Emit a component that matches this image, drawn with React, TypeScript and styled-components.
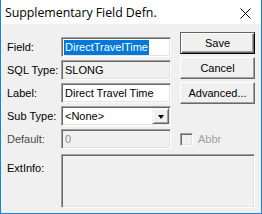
import React from 'react';
import styled, { createGlobalStyle } from 'styled-components';

const GlobalStyle = createGlobalStyle`
  html, body {
    margin: 0;
    padding: 0;
    background: #ffffff;
  }
  * {
    box-sizing: border-box;
  }
`;

const Window = styled.div`
  width: 262px;
  height: 214px;
  display: flex;
  flex-direction: column;
  border: 1px solid #1883d7;
  border-top: none;
  background: #f0f0f0;
  font-family: 'Liberation Sans', Arial, sans-serif;
  font-size: 11px;
  color: #000;
`;

const TitleBar = styled.div`
  height: 24px;
  display: flex;
  align-items: center;
  justify-content: space-between;
  padding: 0 10px 0 4px;
  background: #ffffff;
`;

const TitleText = styled.span`
  font-family: 'Open Sans', 'Noto Sans', sans-serif;
  font-size: 12.4px;
  letter-spacing: -0.05px;
  padding-top: 1px;
`;

const CloseIcon = styled.svg`
  width: 11px;
  height: 11px;
  margin-top: 2px;
`;

const Body = styled.div`
  flex: 1;
  display: flex;
  flex-direction: column;
  padding: 8px 6px 0 6px;
`;

const TopSection = styled.div`
  display: flex;
`;

const FormRows = styled.div`
  display: flex;
  flex-direction: column;
  gap: 3px;
  margin-top: 5px;
`;

const Row = styled.div<{ $mt?: number }>`
  display: flex;
  align-items: center;
  margin-top: ${(p) => p.$mt ?? 0}px;
`;

const TopRow = styled(Row)`
  align-items: flex-start;
`;

const Label = styled.span<{ $disabled?: boolean; $pt?: number }>`
  width: 54px;
  flex-shrink: 0;
  white-space: nowrap;
  color: ${(p) => (p.$disabled ? '#4a4a4a' : '#000')};
  padding-top: ${(p) => p.$pt ?? 0}px;
`;

const Edit = styled.div<{ $bg?: string; $w?: number; $h?: number; $color?: string }>`
  width: ${(p) => p.$w ?? 110}px;
  height: ${(p) => p.$h ?? 20}px;
  display: flex;
  align-items: center;
  padding-left: 1px;
  background: ${(p) => p.$bg ?? '#ffffff'};
  color: ${(p) => p.$color ?? '#000'};
  border-top: 1px solid #a0a0a0;
  border-left: 1px solid #a0a0a0;
  border-right: 1px solid #ffffff;
  border-bottom: 1px solid #ffffff;
  box-shadow: inset 1px 1px #696969, inset -1px -1px #e3e3e3;
  white-space: nowrap;
  overflow: hidden;
`;

const EditText = styled.span`
  padding-left: 2px;
`;

const Selected = styled.span`
  background: #0078d7;
  color: #ffffff;
  padding: 1px 1px 1px 1px;
  line-height: 13px;
  margin-left: 1px;
`;

const ComboText = styled.span`
  flex: 1;
  padding-left: 2px;
`;

const DropButton = styled.div`
  width: 17px;
  height: 16px;
  margin-right: 1px;
  display: flex;
  align-items: center;
  justify-content: center;
  background: #f0f0f0;
  border-top: 1px solid #f0f0f0;
  border-left: 1px solid #f0f0f0;
  border-right: 1px solid #696969;
  border-bottom: 1px solid #696969;
  box-shadow: inset 1px 1px #ffffff, inset -1px -1px #a0a0a0;
`;

const Arrow = styled.div`
  width: 0;
  height: 0;
  border-left: 3.5px solid transparent;
  border-right: 3.5px solid transparent;
  border-top: 4px solid #000;
  margin-top: 1px;
`;

const ButtonColumn = styled.div`
  display: flex;
  flex-direction: column;
  gap: 3px;
  margin-left: 9px;
`;

const Button = styled.button<{ $default?: boolean }>`
  width: 75px;
  height: 22px;
  margin: 0;
  padding: 0;
  font-family: 'Liberation Sans', Arial, sans-serif;
  font-size: 11px;
  color: #000;
  background: #f0f0f0;
  border-top: 1px solid ${(p) => (p.$default ? '#646464' : '#ffffff')};
  border-left: 1px solid ${(p) => (p.$default ? '#646464' : '#ffffff')};
  border-right: 1px solid ${(p) => (p.$default ? '#000000' : '#696969')};
  border-bottom: 1px solid ${(p) => (p.$default ? '#000000' : '#696969')};
  box-shadow: ${(p) =>
    p.$default
      ? 'inset 1px 1px #ffffff, inset -1px -1px #696969, inset -2px -2px #a0a0a0'
      : 'inset -1px -1px #a0a0a0'};
`;

const CheckWrap = styled.div`
  display: flex;
  align-items: center;
  margin-left: 9px;
  gap: 5px;
  color: #a0a0a0;
`;

const CheckBox = styled.div`
  width: 13px;
  height: 13px;
  background: #f0f0f0;
  border-top: 1px solid #a0a0a0;
  border-left: 1px solid #a0a0a0;
  border-right: 1px solid #ffffff;
  border-bottom: 1px solid #ffffff;
  box-shadow: inset 1px 1px #696969, inset -1px -1px #e3e3e3;
`;

export default function App() {
  return (
    <>
      <GlobalStyle />
      <Window>
        <TitleBar>
          <TitleText>Supplementary Field Defn.</TitleText>
          <CloseIcon viewBox="0 0 11 11">
            <path d="M0.5 0.5 L10.5 10.5 M10.5 0.5 L0.5 10.5" stroke="#000" strokeWidth="1" fill="none" />
          </CloseIcon>
        </TitleBar>

        <Body>
          <TopSection>
            <FormRows>
              <Row>
                <Label>Field:</Label>
                <Edit>
                  <Selected>DirectTravelTime</Selected>
                </Edit>
              </Row>
              <Row>
                <Label>SQL Type:</Label>
                <Edit $bg="#f0f0f0">
                  <EditText>SLONG</EditText>
                </Edit>
              </Row>
              <Row>
                <Label>Label:</Label>
                <Edit>
                  <EditText>Direct Travel Time</EditText>
                </Edit>
              </Row>
              <Row>
                <Label>Sub Type:</Label>
                <Edit>
                  <ComboText>{'<None>'}</ComboText>
                  <DropButton>
                    <Arrow />
                  </DropButton>
                </Edit>
              </Row>
            </FormRows>

            <ButtonColumn>
              <Button $default>Save</Button>
              <Button>Cancel</Button>
              <Button>Advanced...</Button>
            </ButtonColumn>
          </TopSection>

          <Row $mt={3}>
            <Label $disabled>Default:</Label>
            <Edit $bg="#f0f0f0" $color="#8a8a8a">
              <EditText>0</EditText>
            </Edit>
            <CheckWrap>
              <CheckBox />
              <span>Abbr</span>
            </CheckWrap>
          </Row>

          <TopRow $mt={5}>
            <Label $pt={8}>ExtInfo:</Label>
            <Edit $bg="#f0f0f0" $w={194} $h={54} />
          </TopRow>
        </Body>
      </Window>
    </>
  );
}
